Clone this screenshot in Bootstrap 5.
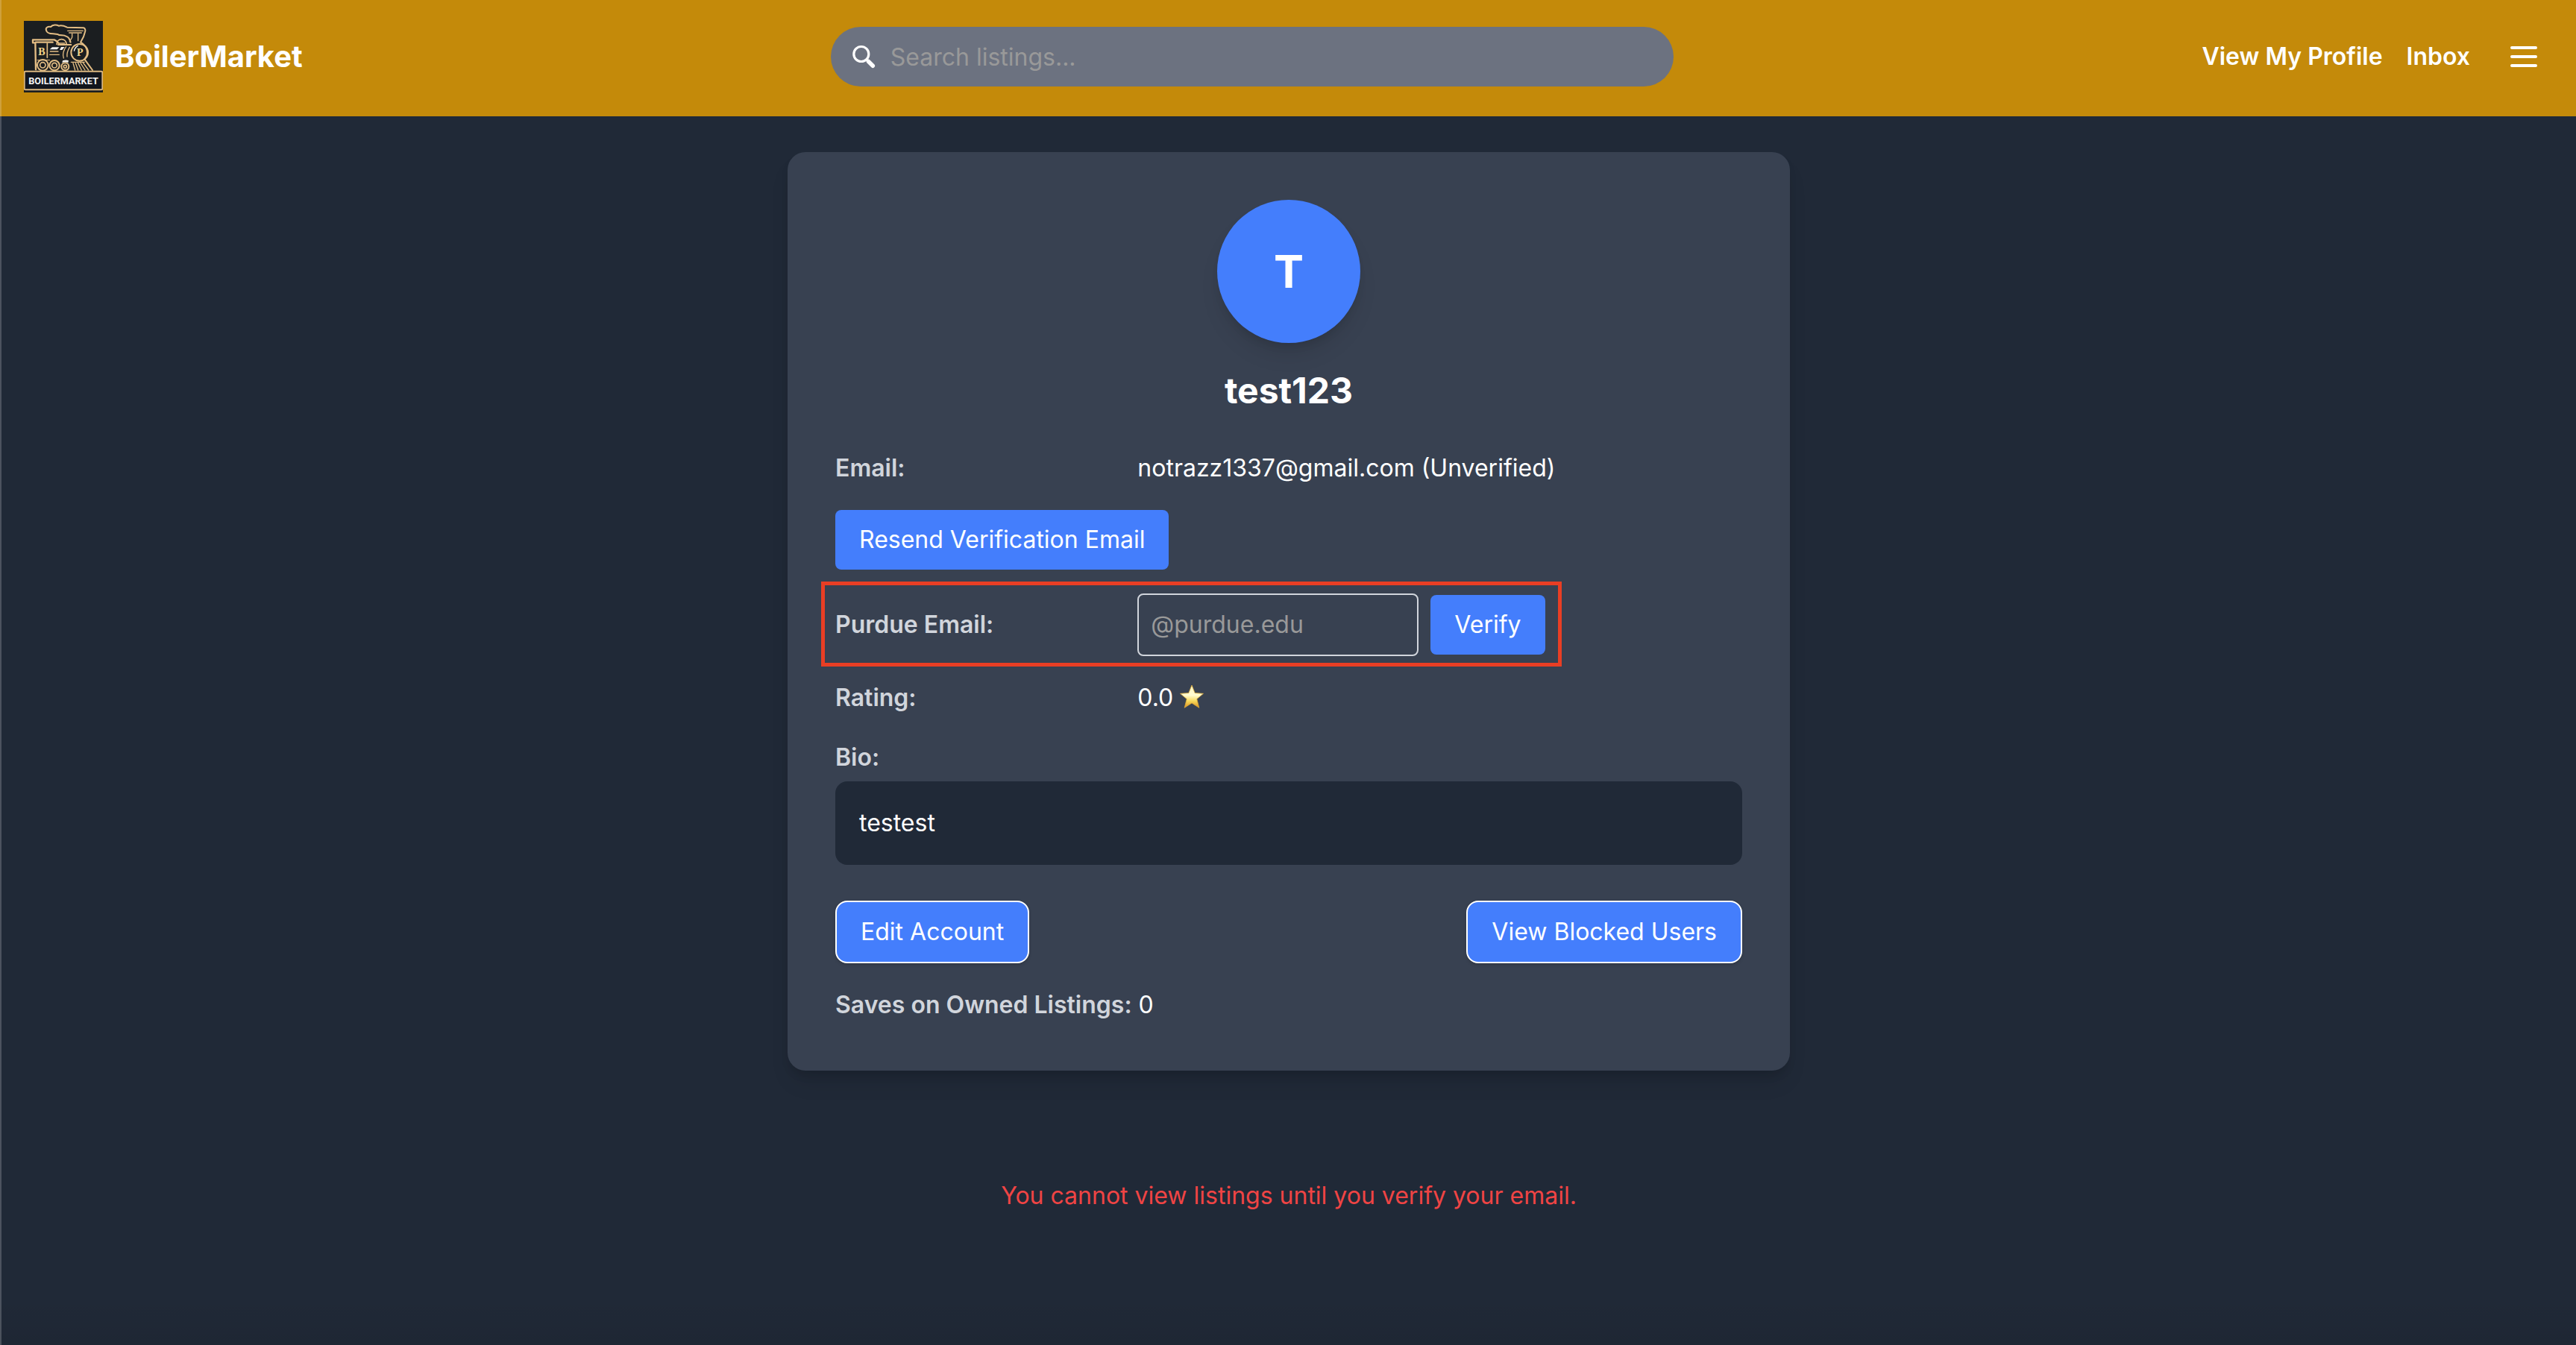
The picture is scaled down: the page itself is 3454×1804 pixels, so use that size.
<!DOCTYPE html>
<html lang="en">
<head>
<meta charset="utf-8">
<meta name="viewport" content="width=device-width, initial-scale=1">
<title>BoilerMarket – Profile</title>
<link href="https://cdn.jsdelivr.net/npm/bootstrap@5.3.0/dist/css/bootstrap.min.css" rel="stylesheet">
<style>
  :root { --bm-blue: #447efc; --bm-night: #202937; --bm-slate: #384151; --bm-label: #d1d5dc; }
  body {
    min-height: 100vh;
    background: linear-gradient(to bottom, transparent calc(100% - 64px), rgba(0, 0, 0, .06)) no-repeat, var(--bm-night);
    color: #fff;
    font-family: Inter, "Liberation Sans", sans-serif;
    font-size: 32px;
    line-height: 48px;
  }
  .edge-line { position: fixed; top: 0; bottom: 0; left: 0; width: 2px; background: rgba(255, 255, 255, .2); z-index: 10; }
  .site-header { background: #c48a0a; padding: 28px 30px 32px 32px; }
  .site-name { font-size: 40px; line-height: 56px; }
  .site-header a { color: #fff; text-decoration: none; }
  .site-logo { width: 106px; height: 96px; }
  .gap-16 { gap: 16px; }
  .gap-32 { gap: 32px; }
  .search-pill { position: relative; }
  .search-pill svg { position: absolute; left: 28px; top: 24px; width: 32px; height: 32px; }
  .search-pill .form-control { height: 80px; padding: 16px 32px 16px 80px; background: #6c7280; border: 0; }
  .form-control, .btn { font-size: 32px; line-height: 48px; color: #fff; }
  .form-control::placeholder { color: #999; opacity: 1; }
  .menu-btn { background: none; border: 0; padding: 16px; display: flex; }
  .profile-wrap { padding: 48px 0 0 2px; }
  .profile-card {
    max-width: 1344px; background: var(--bm-slate); border-radius: 24px; padding: 64px;
    box-shadow: 0 8px 12px -2px rgba(0, 0, 0, .1), 0 20px 30px -6px rgba(0, 0, 0, .1);
  }
  .avatar {
    width: 192px; height: 192px; background: var(--bm-blue); font-size: 60px; line-height: 72px;
    box-shadow: 0 8px 12px -4px rgba(0, 0, 0, .1), 0 20px 30px -6px rgba(0, 0, 0, .1);
  }
  .user-name { font-size: 48px; line-height: 64px; margin: 32px 0 48px; }
  .field-list { gap: 32px; }
  .field-name { color: var(--bm-label); font-weight: 600; }
  .btn-blue { background: var(--bm-blue); border: 0; border-radius: 8px; padding: 16px 32px; }
  .btn-blue:hover { background: #2f6bec; color: #fff; }
  .btn-outlined { border: 2px solid #fff; border-radius: 16px; box-shadow: 0 2px 4px rgba(0, 0, 0, .15); }
  .purdue-input { width: 377px; background: transparent; border: 2px solid var(--bm-label); border-radius: 8px; padding: 16px; }
  .row > .highlight-box { position: absolute; width: auto; top: -16px; right: 242px; bottom: -14px; left: -19px; border: 5px solid #e93e24; pointer-events: none; }
  .bio-box { background: var(--bm-night); border-radius: 16px; padding: 32px; margin-top: 8px; }
  .card-actions { margin: 48px 0 32px; }
  .star-icon { width: 32px; height: 32px; margin-top: -8px; }
  .verify-note { color: #ef4444; margin: 144px 0 0; }
</style>
</head>
<body>
<div class="edge-line"></div>

<header class="site-header d-flex justify-content-between align-items-center">
  <a href="#" class="d-flex align-items-center gap-16">
    <svg class="site-logo" viewBox="36 24 318 288" aria-hidden="true">
      <rect x="36" y="24" width="318" height="288" fill="#1b1e20"/>
      <g fill="none" stroke="#e3bd84" stroke-width="6" stroke-linejoin="round" stroke-linecap="round">
        <path d="M126 62c-4-9 6-17 18-14 8-9 24-9 32-4 12-3 24 1 34 6l66 2c8 2 8 12 6 16l-6 20-12 22c22 12 32 34 24 56l-8 12 32 44"/>
        <path d="M126 62c2 10 14 14 28 14l18 2c8 8 24 0 34 8 12 4 14 12 18 24"/>
        <path d="M212 64h62M218 72h50M230 76v14l-10 18M254 76v28" stroke-width="4"/>
        <path d="M72 100h86l10 6 8 8M72 100v12h10l2 108M84 110h68" stroke-width="7"/>
        <path d="M130 114v58" stroke-width="5"/>
        <path d="M168 118c2-26 36-28 40 0M178 114h22" stroke-width="5"/>
        <path d="M174 120h52" stroke-width="6"/>
        <path d="M142 147h32M140 160h38M196 174c-6-14 0-34 10-46M210 168c-2-14 4-28 10-38" stroke-width="4"/>
        <circle cx="260" cy="151" r="34"/>
        <circle cx="112" cy="202" r="22"/><circle cx="112" cy="202" r="11" stroke-width="5"/>
        <circle cx="159" cy="203" r="20"/><circle cx="159" cy="203" r="10" stroke-width="5"/>
        <circle cx="202" cy="208" r="15"/><circle cx="202" cy="208" r="6" stroke-width="5"/>
        <path d="M226 190h54M234 194l8 28M244 194l10 28M254 194l14 28M264 194l18 28M274 192l22 30" stroke-width="4"/>
        <path d="M90 182h50" stroke-width="3"/>
      </g>
      <path d="M150 130h28l-8 9h-30zM186 129h14l-10 12h-10zM192 184q14-5 24 0l-2 8q-12-4-24 0z" fill="#f4f2ee"/>
      <path d="M238 146q3-16 16-22" fill="none" stroke="#fff" stroke-width="4"/>
      <g fill="#f1d58b" font-family="'Liberation Serif', serif" font-weight="700" font-size="42" text-anchor="middle">
        <text x="108" y="162">B</text><text x="262" y="166">P</text>
      </g>
      <rect x="38" y="227" width="314" height="74" rx="5" fill="#11151d" stroke="#d9b680" stroke-width="6"/>
      <text x="195" y="278" fill="#f4f4f4" font-family="Roboto, sans-serif" font-weight="700" font-size="38" text-anchor="middle">BOILERMARKET</text>
    </svg>
    <span class="site-name fw-bold">BoilerMarket</span>
  </a>

  <form class="search-pill col-4" role="search">
    <svg viewBox="0 0 32 32" fill="none" stroke="#fff" stroke-linecap="round" aria-hidden="true">
      <circle cx="12.8" cy="12.5" r="10" stroke-width="3.2"/>
      <path d="M20 20l1.500 1.500" stroke-width="3.500"/><path d="M22.500 22.500l5.800 5.800" stroke-width="5.500"/>
    </svg>
    <input type="search" class="form-control rounded-pill" placeholder="Search listings..." aria-label="Search listings">
  </form>

  <nav class="d-flex align-items-center gap-32 fw-semibold">
    <a href="#">View My Profile</a>
    <a href="#">Inbox</a>
    <button type="button" class="menu-btn" aria-label="Open menu">
      <svg width="48" height="48" viewBox="0 0 24 24" fill="none" stroke="#fff" stroke-width="2" stroke-linecap="round"><path d="M4 6h16M4 12h16M4 18h16"/></svg>
    </button>
  </nav>
</header>

<main class="profile-wrap">
  <section class="profile-card mx-auto">
    <div class="avatar rounded-circle mx-auto d-flex align-items-center justify-content-center fw-bold">T</div>
    <h1 class="user-name fw-bold text-center">test123</h1>

    <div class="field-list d-flex flex-column">
      <div class="row g-0">
        <div class="col-4 field-name">Email:</div>
        <div class="col-8">notrazz1337@gmail.com (Unverified)</div>
      </div>
      <button type="button" class="btn btn-blue align-self-start">Resend Verification Email</button>
      <form class="row g-0 align-items-center position-relative">
        <label for="purdue" class="col-4 field-name">Purdue Email:</label>
        <div class="col-8 d-flex align-items-center gap-16">
          <input type="email" id="purdue" class="form-control purdue-input" placeholder="@purdue.edu">
          <button type="button" class="btn btn-blue">Verify</button>
        </div>
        <div class="highlight-box"></div>
      </form>
      <div class="row g-0">
        <div class="col-4 field-name">Rating:</div>
        <div class="col-8">0.0
          <svg class="star-icon" viewBox="0 0 32 32" role="img" aria-label="star">
            <defs><linearGradient id="starFill" x1="0" y1="0" x2="0" y2="1"><stop offset="0" stop-color="#fff6c4"/><stop offset=".45" stop-color="#fffbd0"/><stop offset=".7" stop-color="#f7d95a"/><stop offset="1" stop-color="#dd9020"/></linearGradient></defs>
            <path d="M16 1l4.200 10.500 11.300.8-8.700 7.300 3 11.700L16 25l-9.800 6.300 3-11.700L.5 12.300l11.300-.8z" fill="url(#starFill)" stroke="#dba838" stroke-width=".8" stroke-linejoin="round"/>
          </svg>
        </div>
      </div>
      <div>
        <div class="field-name">Bio:</div>
        <div class="bio-box">testest</div>
      </div>
    </div>

    <div class="card-actions d-flex justify-content-between">
      <button type="button" class="btn btn-blue btn-outlined">Edit Account</button>
      <button type="button" class="btn btn-blue btn-outlined">View Blocked Users</button>
    </div>
    <div><span class="field-name">Saves on Owned Listings:</span> 0</div>
  </section>

  <p class="verify-note text-center">You cannot view listings until you verify your email.</p>
</main>
<script src="https://cdn.jsdelivr.net/npm/bootstrap@5.3.0/dist/js/bootstrap.bundle.min.js"></script>
</body>
</html>
